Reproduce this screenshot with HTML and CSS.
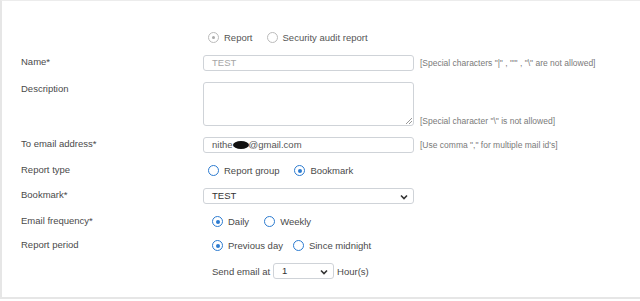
FILE: index.html
```html
<!DOCTYPE html>
<html lang="en">
<head>
  <meta charset="UTF-8" />
  <meta name="viewport" content="width=device-width, initial-scale=1.0" />
  <title>Report schedule</title>
  <link rel="stylesheet" href="styles.css">
</head>
<body>
  <div class="panel">
    <form class="form">
      <div class="row row-radio">
        <div class="label"></div>
        <div class="control">
          <label class="radio disabled checked"><span class="dot"></span>Report</label>
          <label class="radio disabled"><span class="dot"></span>Security audit report</label>
        </div>
      </div>

      <div class="row">
        <div class="label">Name*</div>
        <div class="control">
          <div class="field disabled-text">TEST</div>
          <span class="hint">[Special characters "|" , "'" , "\" are not allowed]</span>
        </div>
      </div>

      <div class="row">
        <div class="label">Description</div>
        <div class="control bottom">
          <div class="field textarea"><span class="grip"></span></div>
          <span class="hint">[Special character "\" is not allowed]</span>
        </div>
      </div>

      <div class="row">
        <div class="label">To email address*</div>
        <div class="control">
          <div class="field">nithe<span class="blot"></span>@gmail.com</div>
          <span class="hint">[Use comma "," for multiple mail id's]</span>
        </div>
      </div>

      <div class="row row-radio">
        <div class="label">Report type</div>
        <div class="control">
          <label class="radio"><span class="dot"></span>Report group</label>
          <label class="radio checked"><span class="dot"></span>Bookmark</label>
        </div>
      </div>

      <div class="row">
        <div class="label">Bookmark*</div>
        <div class="control">
          <div class="field select dark">TEST
            <svg class="chev" width="8" height="6" viewBox="0 0 8 6"><path d="M1 1.5 L4 4.5 L7 1.5" fill="none" stroke="#333" stroke-width="1.6"/></svg>
          </div>
        </div>
      </div>

      <div class="row row-radio">
        <div class="label">Email frequency*</div>
        <div class="control indent">
          <label class="radio checked"><span class="dot"></span>Daily</label>
          <label class="radio"><span class="dot"></span>Weekly</label>
        </div>
      </div>

      <div class="row row-radio">
        <div class="label">Report period</div>
        <div class="control indent">
          <label class="radio checked tight"><span class="dot"></span>Previous day</label>
          <label class="radio"><span class="dot"></span>Since midnight</label>
        </div>
      </div>

      <div class="row">
        <div class="label"></div>
        <div class="control indent send">
          <span>Send email at</span>
          <div class="field select small dark">1
            <svg class="chev" width="8" height="6" viewBox="0 0 8 6"><path d="M1 1.5 L4 4.5 L7 1.5" fill="none" stroke="#333" stroke-width="1.6"/></svg>
          </div>
          <span>Hour(s)</span>
        </div>
      </div>
    </form>
  </div>
</body>
</html>
```

FILE: styles.css
```css
body {
  margin: 0;
  background: #fff;
  font-family: "Liberation Sans", Arial, sans-serif;
  font-size: 9.5px;
  color: #4a4a4a;
}
.panel {
  height: 299px;
  border-top: 1px solid #ececec;
  border-left: 2px solid #e6e6e6;
  border-bottom: 2px solid #e6e6e6;
  box-sizing: border-box;
}
.form {
  display: flex;
  flex-direction: column;
  gap: 11px;
  padding: 30px 0 0 19px;
}
.row {
  display: flex;
  align-items: flex-start;
}
.label {
  width: 182px;
  flex: none;
  line-height: 12px;
  padding-top: 1px;
}
.control {
  display: flex;
  align-items: center;
  gap: 6px;
}
.control.bottom {
  align-items: flex-end;
}
.control.indent {
  padding-left: 9px;
}
.field {
  position: relative;
  width: 211px;
  height: 16px;
  box-sizing: border-box;
  border: 1px solid #cfd3d8;
  border-radius: 3px;
  padding: 0 8px;
  line-height: 14px;
  color: #555;
  display: flex;
  align-items: center;
}
.disabled-text {
  color: #a5a5a5;
}
.dark {
  color: #333;
}
.textarea {
  height: 44px;
}
.grip {
  position: absolute;
  right: 1px;
  bottom: 1px;
  width: 6px;
  height: 6px;
  background: linear-gradient(135deg, transparent 45%, #999 46%, #999 54%, transparent 55%, transparent 70%, #999 71%, #999 79%, transparent 80%);
}
.blot {
  display: inline-block;
  width: 16px;
  height: 8px;
  background: #111;
  border-radius: 50%;
}
.select.small {
  width: 61px;
}
.chev {
  position: absolute;
  right: 5px;
  top: 5px;
}
.hint {
  font-size: 8.5px;
  color: #7a7a7a;
  white-space: nowrap;
}
.radio {
  display: flex;
  align-items: center;
  gap: 5px;
  height: 13px;
  margin-right: 15px;
}
.radio.tight {
  margin-right: 10px;
}
.dot {
  width: 11px;
  height: 11px;
  box-sizing: border-box;
  border: 1.8px solid #2c7bd0;
  border-radius: 50%;
  display: flex;
  align-items: center;
  justify-content: center;
}
.radio.checked .dot::after {
  content: "";
  width: 4px;
  height: 4px;
  border-radius: 50%;
  background: #2c7bd0;
}
.radio.disabled {
  color: #555;
  margin-right: 14px;
}
.radio.disabled .dot {
  border: 1px solid #bbb;
}
.radio.disabled.checked .dot::after {
  width: 3px;
  height: 3px;
  background: #aaa;
}
.row-radio .label {
  padding-top: 0;
}
.row-radio .control {
  gap: 0;
  padding-left: 5px;
}
.row-radio .control.indent {
  padding-left: 9px;
}
.send {
  gap: 3px;
}
```
